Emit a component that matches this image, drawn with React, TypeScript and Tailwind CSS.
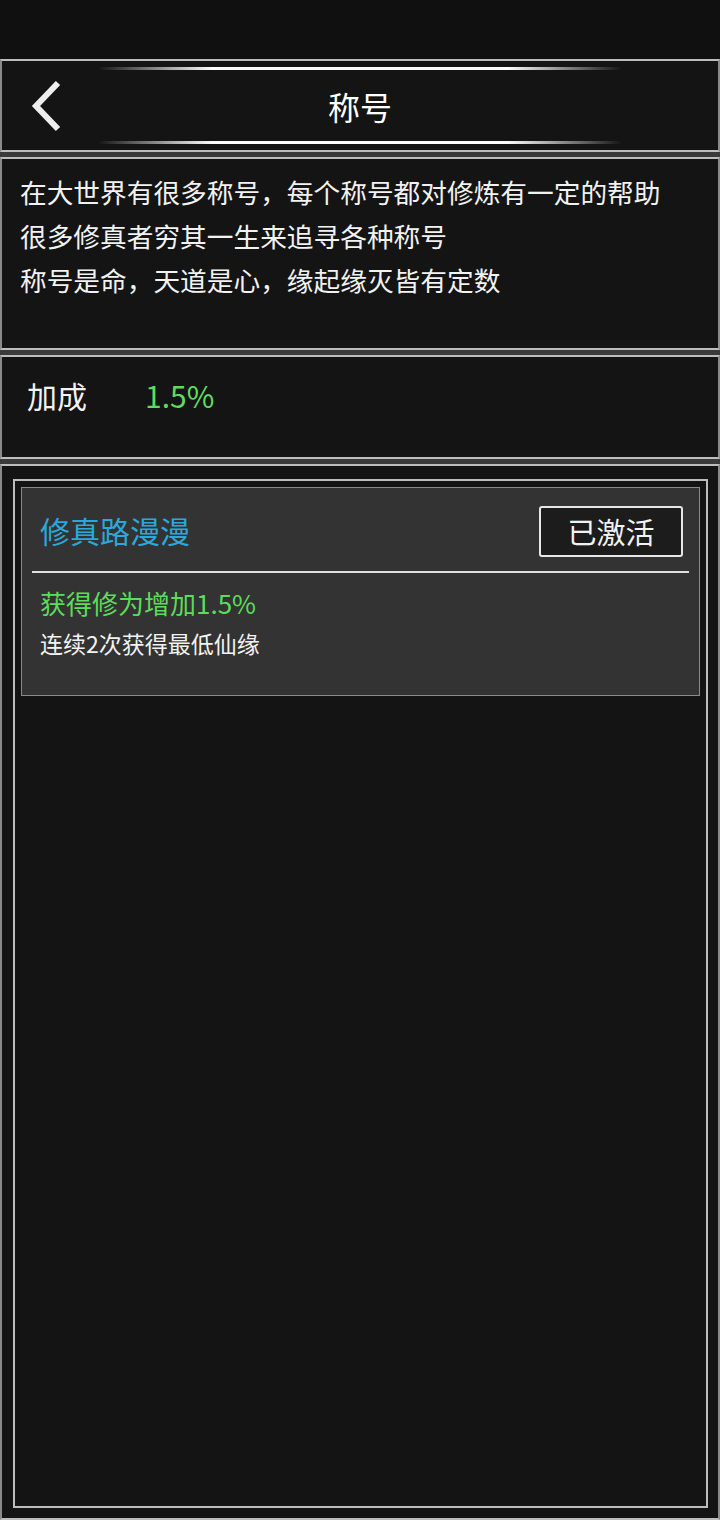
export default function App() {
  const font = { fontFamily: '"Noto Sans CJK SC", "Noto Sans", sans-serif' };
  return (
    <div className="w-[720px] h-[1520px] bg-[#3a3a3a] flex flex-col gap-[5px] text-white" style={font}>
      <div className="h-[59px] bg-[#101010] -mb-[5px]" />

      {/* header */}
      <div className="relative h-[93px] bg-[#141414] border-y-2 border-y-[#bdbdbd] border-x-2 border-x-[#8a8a8a] flex flex-col justify-between py-[6px]">
        <div className="mx-[96px] h-[3px] bg-[linear-gradient(to_right,transparent,#ffffff_22%,#ffffff_78%,transparent)]" />
        <div className="flex items-center h-[60px]">
          <svg width="40" height="52" viewBox="0 0 40 52" className="ml-[26px]">
            <polyline points="30,3 8,26 30,49" fill="none" stroke="#eeeeee" strokeWidth="6" strokeLinejoin="miter" />
          </svg>
          <div className="absolute left-0 right-0 text-center text-[32px] leading-none pointer-events-none">称号</div>
        </div>
        <div className="mx-[96px] h-[3px] bg-[linear-gradient(to_right,transparent,#ffffff_22%,#ffffff_78%,transparent)]" />
      </div>

      {/* description */}
      <div className="h-[193px] bg-[#141414] border-y-2 border-y-[#bdbdbd] border-x-2 border-x-[#8a8a8a] pl-[18px] pt-[11px] text-[26.7px] leading-[44px] text-[#f2f2f2]">
        <div>在大世界有很多称号，每个称号都对修炼有一定的帮助</div>
        <div>很多修真者穷其一生来追寻各种称号</div>
        <div>称号是命，天道是心，缘起缘灭皆有定数</div>
      </div>

      {/* bonus */}
      <div className="h-[104px] bg-[#141414] border-y-2 border-y-[#bdbdbd] border-x-2 border-x-[#8a8a8a] flex items-start pl-[25px] pt-[18px] text-[30px] leading-[40px]">
        <span className="text-[#f2f2f2]">加成</span>
        <span className="ml-[58px] text-[#5fdc5f]">1.5%</span>
      </div>

      {/* list */}
      <div className="flex-1 bg-[#141414] border-y-2 border-y-[#bdbdbd] border-x-2 border-x-[#8a8a8a] pt-[13px] pl-[11px] pr-[10px] pb-[10px] flex">
        <div className="flex-1 border-2 border-[#bdbdbd] p-[6px]">
          <div className="h-[209px] bg-[#333333] border border-[#8a8a8a]">
            <div className="flex items-center justify-between pl-[18px] pr-[16px] pt-[18px]">
              <span className="text-[30px] leading-none text-[#2aa8dc] -mt-[4px]">修真路漫漫</span>
              <div className="w-[144px] h-[51px] rounded-[3px] border-2 border-[#e6e6e6] bg-[#1c1c1c] flex items-center justify-center text-[29px] leading-none text-[#f2f2f2]">
                已激活
              </div>
            </div>
            <div className="mx-[10px] mt-[14px] h-[2px] bg-[#e0e0e0]" />
            <div className="pl-[18px] mt-[14px] text-[26px] leading-[32px] text-[#5cdc5c]">获得修为增加1.5%</div>
            <div className="pl-[18px] mt-[8px] text-[23px] leading-[32px] text-[#f2f2f2]">连续2次获得最低仙缘</div>
          </div>
        </div>
      </div>
    </div>
  );
}
